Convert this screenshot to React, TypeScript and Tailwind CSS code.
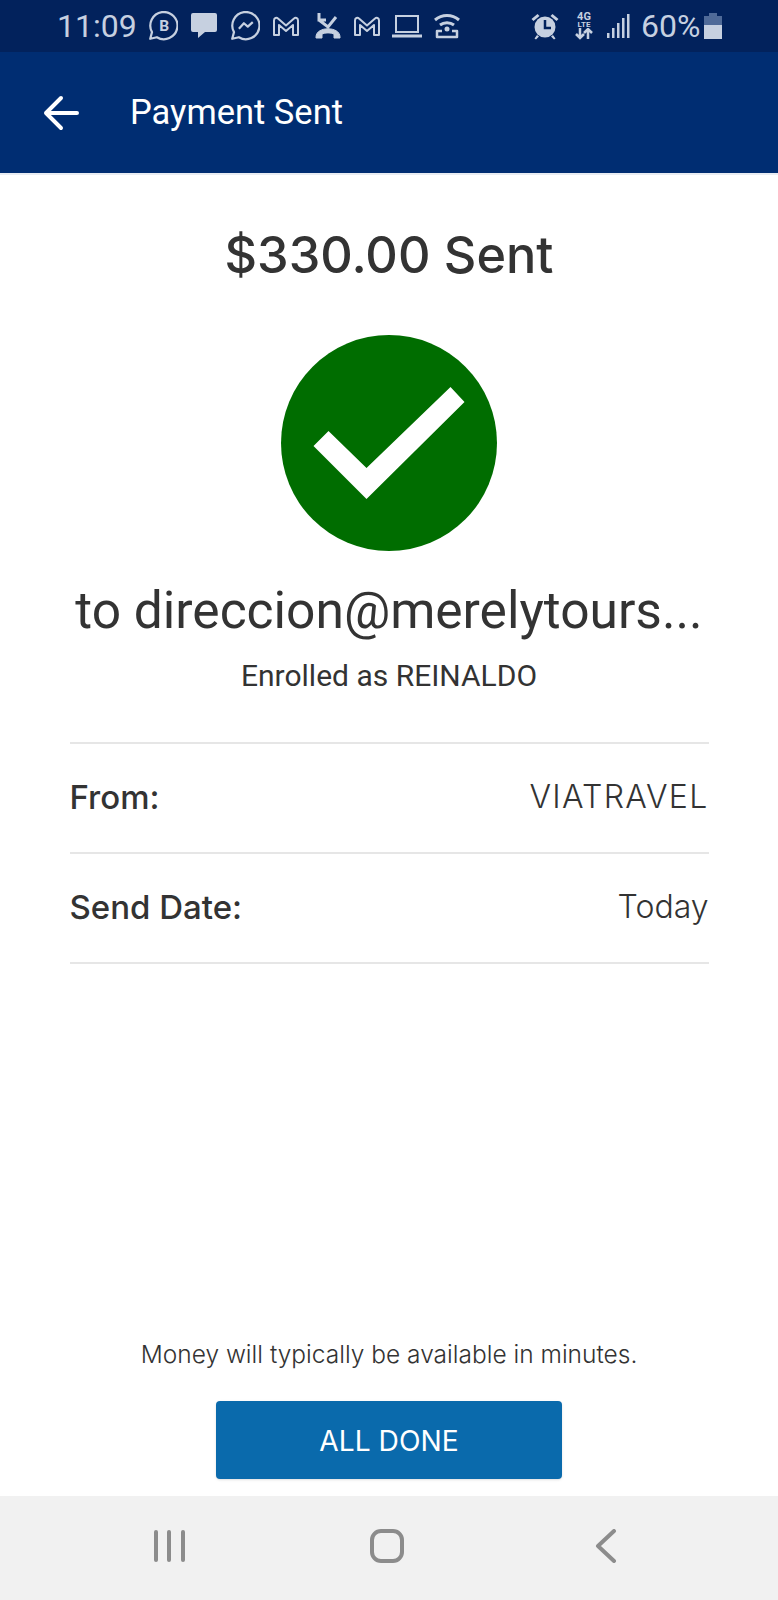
const statusColor = "#c6d0e0";

function BusinessChat() {
  return (
    <svg width="30" height="30" viewBox="1 2 27 27" fill="none" stroke={statusColor} strokeWidth="2">
      <path d="M3 27l1.6-6A12.2 12.2 0 1 1 9 25.6z" strokeLinejoin="round" />
      <text x="15.500" y="20" textAnchor="middle" fontSize="14" fontWeight="700" fontFamily="Roboto, sans-serif" fill={statusColor} stroke="none">
        B
      </text>
    </svg>
  );
}

function Messenger() {
  return (
    <svg width="30" height="30" viewBox="1 2 27 27" fill="none" stroke={statusColor} strokeWidth="2">
      <path d="M3 27l1.6-6A12.2 12.2 0 1 1 9 25.6z" strokeLinejoin="round" />
      <path d="M9 18l4.5-5 3.5 3 4.5-4" strokeLinejoin="round" />
    </svg>
  );
}

function Gmail() {
  return (
    <svg width="28" height="24" viewBox="0 0 28 24" fill="none" stroke={statusColor} strokeWidth="2">
      <path d="M2 6.5C2 4 4.5 3 6 4.5l8 7 8-7C23.500 3 26 4 26 6.500V21h-5V11l-7 6-7-6v10H2z" strokeLinejoin="round" />
    </svg>
  );
}

function TopIcons() {
  return (
    <div className="flex items-center">
      <span className="ml-[11px]">
        <BusinessChat />
      </span>
      <svg className="ml-[12px]" width="28" height="28" viewBox="0 0 28 28" fill={statusColor}>
        <path d="M3 1h22a2 2 0 0 1 2 2v15a2 2 0 0 1-2 2H15l-7 6v-6H3a2 2 0 0 1-2-2V3a2 2 0 0 1 2-2z" />
      </svg>
      <span className="ml-[12px]">
        <Messenger />
      </span>
      <span className="ml-[12px]">
        <Gmail />
      </span>
      <svg className="ml-[14px]" width="28" height="28" viewBox="0 0 28 28" fill="none" stroke={statusColor}>
        <path d="M5 1v7h7M5 8l9 7 8-10" strokeWidth="3" />
        <path d="M2 25c0-11 24-11 24 0v1h-6v-4c-3-1.500-9-1.500-12 0v4H2z" fill={statusColor} strokeWidth="1" />
      </svg>
      <span className="ml-[11px]">
        <Gmail />
      </span>
      <svg className="ml-[10px]" width="32" height="26" viewBox="0 0 32 26" fill="none" stroke={statusColor} strokeWidth="2">
        <rect x="5" y="3" width="22" height="16" />
        <path d="M1 23h30" strokeWidth="3" />
      </svg>
      <svg className="ml-[10px]" width="28" height="28" viewBox="0 0 28 28" fill="none" stroke={statusColor} strokeWidth="3">
        <path d="M2 8c7-6 17-6 24 0M7 13c4-3 10-3 14 0" />
        <circle cx="14" cy="17" r="2.500" fill={statusColor} stroke="none" />
        <path d="M9 19H4v6h20v-6h-5" fill="none" strokeWidth="2.500" strokeLinejoin="round" />
      </svg>
    </div>
  );
}

function RightIcons() {
  return (
    <div className="flex items-center">
      <svg width="30" height="30" viewBox="0 0 30 30" fill={statusColor}>
        <circle cx="15" cy="16" r="10.500" />
        <path d="M1.500 8l6-5 2 2-6 5zM28.500 8l-6-5-2 2 6 5zM7 24l-2.500 3.500 1.500 1 3-3zM23 24l2.500 3.500-1.500 1-3-3z" />
        <path d="M15 9v8h6" fill="none" stroke="#02225c" strokeWidth="2.500" />
      </svg>
      <div className="ml-[14px] flex h-[28px] w-[20px] flex-col items-center font-['Roboto',sans-serif] font-bold leading-none text-[#c6d0e0]">
        <span className="text-[11px] leading-[9px]">4G</span>
        <span className="text-[8px] leading-[7px]">LTE</span>
        <svg width="20" height="12" viewBox="0 0 20 12" fill="none" stroke={statusColor} strokeWidth="2.500">
          <path d="M6 0v10M2 6l4 4 4-4M14 11V1M10 5l4-4 4 4" />
        </svg>
      </div>
      <svg className="ml-[12px]" width="24" height="26" viewBox="0 0 24 26" fill={statusColor}>
        <rect x="1" y="20" width="2.500" height="5" />
        <rect x="6" y="15" width="2.500" height="10" />
        <rect x="11" y="10" width="2.500" height="15" />
        <rect x="16" y="5" width="2.500" height="20" />
        <rect x="21" y="1" width="2.500" height="24" />
      </svg>
      <span className="ml-[11px] text-[32px] leading-none text-[#c6d0e0]">60%</span>
      <div className="ml-[4px] flex h-[26px] w-[18px] flex-col items-center">
        <div className="h-[3px] w-[8px] bg-[#4f6a98]" />
        <div className="h-[9px] w-full bg-[#4f6a98]" />
        <div className="h-[14px] w-full bg-[#c6d0e0]" />
      </div>
    </div>
  );
}

function Row({ label, value, valueClass }: { label: string; value: string; valueClass?: string }) {
  return (
    <div className="flex h-[110px] items-center justify-between border-b-2 border-[#e6e6e6] pb-[2px] text-[#333333]">
      <span className="font-['Inter',sans-serif] text-[33px] font-medium leading-none">{label}</span>
      <span className={`font-['Inter',sans-serif] text-[32px] font-light leading-none ${valueClass ?? ""}`}>{value}</span>
    </div>
  );
}

export default function App() {
  return (
    <div className="flex h-[1600px] w-[778px] flex-col overflow-hidden bg-white font-['Roboto',sans-serif]">
      {/* Android status bar */}
      <div className="flex h-[52px] shrink-0 items-center bg-[#02225c] pl-[57px]">
        <span className="w-[80px] text-[32px] leading-none text-[#c6d0e0]">11:09</span>
        <TopIcons />
        <div className="ml-[69px]">
          <RightIcons />
        </div>
      </div>

      {/* Header */}
      <div className="flex h-[123px] shrink-0 items-center border-b-2 border-[#e8ecf2] bg-[#002d72] pl-[43px]">
        <svg width="36" height="36" viewBox="0 0 36 36" fill="none" stroke="white" strokeWidth="4" strokeLinecap="round" strokeLinejoin="round">
          <path d="M34 18H3M18 3L3 18l15 15" />
        </svg>
        <span className="ml-[51px] text-[34.500px] leading-none text-white">Payment Sent</span>
      </div>

      {/* Body */}
      <div className="flex flex-1 flex-col items-center">
        <h1 className="mt-[53px] font-['Inter',sans-serif] text-[50.400px] font-medium leading-[53px] text-[#333333]">
          $330.00 Sent
        </h1>
        <div className="mt-[54px] flex h-[216px] w-[216px] items-center justify-center rounded-full bg-[#006d00]">
          <svg width="158" height="112" viewBox="314 384 151 112" fill="white">
            <path d="M314 443l15-15 38 37 84-81 14 15-98 97z" />
          </svg>
        </div>
        <div className="mt-[30px] text-[51.500px] leading-[60px] text-[#333333]">to direccion@merelytours...</div>
        <div className="mt-[17px] text-[30px] leading-[36px] text-[#333333]">Enrolled as REINALDO</div>

        <div className="mt-[48px] w-[639px] border-t-2 border-[#e6e6e6]">
          <Row label="From:" value="VIATRAVEL" valueClass="tracking-[1.300px]" />
          <Row label="Send Date:" value="Today" />
        </div>

        <p className="mt-auto font-['Inter',sans-serif] text-[24.500px] font-light leading-none text-[#333333]">
          Money will typically be available in minutes.
        </p>
        <button className="mb-[17px] mt-[35px] h-[78px] w-[346px] rounded-[4px] bg-[#0a6aac] pt-[2px] font-['Inter',sans-serif] text-[28.200px] text-white shadow-sm">
          ALL DONE
        </button>
      </div>

      {/* Android nav bar */}
      <div className="flex h-[104px] shrink-0 items-center bg-[#f1f1f1] pb-[4px]">
        <div className="ml-[154px] flex gap-[9.250px]">
          <div className="h-[32px] w-[4px] rounded-full bg-[#8c8c8c]" />
          <div className="h-[32px] w-[4px] rounded-full bg-[#8c8c8c]" />
          <div className="h-[32px] w-[4px] rounded-full bg-[#8c8c8c]" />
        </div>
        <div className="ml-[185.500px] h-[34px] w-[34px] rounded-[11px] border-[4px] border-[#8c8c8c]" />
        <svg className="ml-[191px]" width="22" height="34" viewBox="0 0 22 34" fill="none" stroke="#8c8c8c" strokeWidth="4" strokeLinecap="round" strokeLinejoin="round">
          <path d="M19 2L3 17l16 15" />
        </svg>
      </div>
    </div>
  );
}
